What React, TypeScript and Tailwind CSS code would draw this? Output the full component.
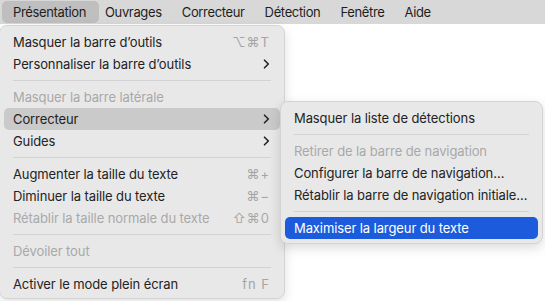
import React from "react";

type Item =
  | { sep: true }
  | {
      sep?: false;
      label: string;
      shortcut?: string;
      sub?: boolean;
      disabled?: boolean;
      active?: "gray" | "blue";
    };

const mainItems: Item[] = [
  { label: "Masquer la barre d’outils", shortcut: "⌥⌘T" },
  { label: "Personnaliser la barre d’outils", sub: true },
  { sep: true },
  { label: "Masquer la barre latérale", disabled: true },
  { label: "Correcteur", sub: true, active: "gray" },
  { label: "Guides", sub: true },
  { sep: true },
  { label: "Augmenter la taille du texte", shortcut: "⌘+" },
  { label: "Diminuer la taille du texte", shortcut: "⌘−" },
  { label: "Rétablir la taille normale du texte", shortcut: "⇧⌘0", disabled: true },
  { sep: true },
  { label: "Dévoiler tout", disabled: true },
  { sep: true },
  { label: "Activer le mode plein écran", shortcut: "fn F" },
];

const subItems: Item[] = [
  { label: "Masquer la liste de détections" },
  { sep: true },
  { label: "Retirer de la barre de navigation", disabled: true },
  { label: "Configurer la barre de navigation…" },
  { label: "Rétablir la barre de navigation initiale…" },
  { sep: true },
  { label: "Maximiser la largeur du texte", active: "blue" },
];

const Chevron = () => (
  <svg width="7" height="10" viewBox="0 0 7 10" className="block">
    <path
      d="M1.5 1.2 L5.3 5 L1.5 8.8"
      fill="none"
      stroke="#222"
      strokeWidth="1.6"
      strokeLinecap="round"
      strokeLinejoin="round"
    />
  </svg>
);

const MenuRow = ({ item }: { item: Item }) => {
  if (item.sep) {
    return (
      <div className="h-[11px] flex items-center px-[13px]">
        <div className="h-px w-full bg-[#d2d2d2]" />
      </div>
    );
  }
  const bg =
    item.active === "gray"
      ? "bg-[#cacaca]"
      : item.active === "blue"
      ? "bg-[#1c5cdc]"
      : "";
  const text =
    item.active === "blue"
      ? "text-white"
      : item.disabled
      ? "text-[#a8a8a8]"
      : "text-[#232323]";
  return (
    <div
      className={`h-[22px] mx-[4px] pl-[9px] pr-[10px] rounded-[5px] flex items-center justify-between ${bg} ${text}`}
    >
      <span className="whitespace-nowrap tracking-[-0.1px]">{item.label}</span>
      {item.shortcut && (
        <span
          className={`whitespace-nowrap tracking-[1px] ${
            item.disabled ? "text-[#a8a8a8]" : "text-[#a4a4a4]"
          }`}
        >
          {item.shortcut}
        </span>
      )}
      {item.sub && <Chevron />}
    </div>
  );
};

const menuTitles = ["Présentation", "Ouvrages", "Correcteur", "Détection", "Fenêtre", "Aide"];

export default function App() {
  return (
    <div
      className="relative w-[545px] h-[301px] bg-white overflow-hidden text-[13px] leading-none"
      style={{ fontFamily: "Inter, 'Noto Sans', sans-serif" }}
    >
      <div className="h-[24px] bg-[#d8d8d8] flex items-center pl-[2px]">
        {menuTitles.map((t, i) => (
          <div
            key={t}
            className={`h-[22px] flex items-center rounded-[5px] tracking-[-0.35px] text-[#1e1e1e] ${
              i === 0 ? "bg-[#bfbfbf] pl-[11px] pr-[13px] mr-[-4px]" : "px-[10px]"
            }`}
          >
            {t}
          </div>
        ))}
      </div>

      <div className="absolute left-[-1px] top-[25px] w-[286px] pt-[5px] pb-[3px] rounded-[8px] bg-[#e8e8e8] border border-[#d4d4d4] shadow-[0_4px_12px_rgba(0,0,0,0.12)]">
        {mainItems.map((it, i) => (
          <MenuRow key={i} item={it} />
        ))}
      </div>

      <div className="absolute left-[280px] top-[101px] w-[263px] pt-[5px] pb-[4px] rounded-[8px] bg-[#e8e8e8] border border-[#d4d4d4] shadow-[0_4px_12px_rgba(0,0,0,0.14)]">
        {subItems.map((it, i) => (
          <MenuRow key={i} item={it} />
        ))}
      </div>
    </div>
  );
}
